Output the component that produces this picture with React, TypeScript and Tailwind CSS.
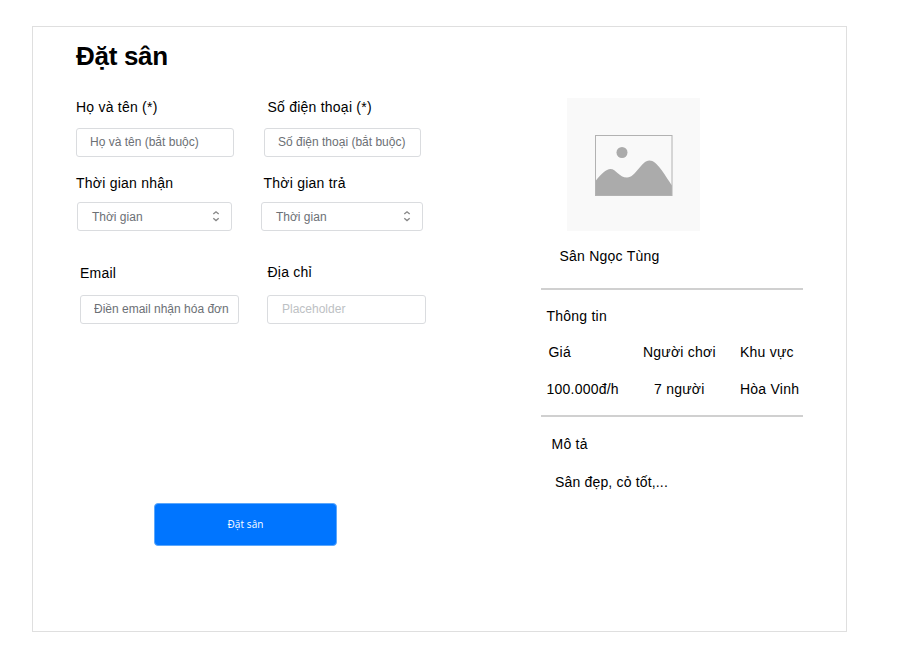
import type { ReactNode } from "react";

function Label({ className = "", children }: { className?: string; children: ReactNode }) {
  return (
    <span className={`block h-5 whitespace-nowrap text-[14px] leading-5 text-black ${className}`}>{children}</span>
  );
}

function TextInput({ className = "", placeholder }: { className?: string; placeholder: string }) {
  return (
    <input
      type="text"
      placeholder={placeholder}
      className={`block h-[29px] rounded-[3px] border border-[#dadcdf] bg-white pb-0.5 text-[12px] outline-none ${className}`}
    />
  );
}

function Select({ className = "" }: { className?: string }) {
  return (
    <button
      type="button"
      className={`flex h-[29px] items-center justify-between rounded-[3px] border border-[#dadcdf] bg-white pl-[14px] text-[12px] text-[#6c7075] ${className}`}
    >
      <span>Thời gian</span>
      <svg width="8" height="12" viewBox="0 0 8 12" fill="none" stroke="#888" strokeWidth="1.4" className="-mt-px">
        <path d="M1.3 4 4 1.8 6.7 4M1.3 8.3 4 10.5 6.7 8.3" />
      </svg>
    </button>
  );
}

export default function App() {
  return (
    <div className="h-[672px] w-[905px] overflow-hidden bg-white pl-8 pt-[26px] font-['Liberation_Sans',Arial,sans-serif]">
      <main className="flex h-[606px] w-[815px] border border-[#dfdfdf]">
        <form className="flex w-[508px] flex-col pl-[43px] pt-[13px]">
          <h1 className="h-8 text-[26px] font-bold leading-8 tracking-[-0.3px] text-black">Đặt sân</h1>

          <div className="mt-[25px] flex">
            <div className="w-[188px]">
              <Label className="tracking-[0.23px]">Họ và tên (*)</Label>
              <TextInput className="mt-[11px] w-[158px] pl-[13px] placeholder:text-[#6c7075]" placeholder="Họ và tên (bắt buộc)" />
            </div>
            <div>
              <Label className="pl-[3.5px] tracking-[0.23px]">Số điện thoại (*)</Label>
              <TextInput className="mt-[11px] w-[157px] pl-[13px] placeholder:text-[#6c7075]" placeholder="Số điện thoại (bắt buộc)" />
            </div>
          </div>

          <div className="mt-4 flex">
            <div className="w-[185px]">
              <Label className="tracking-[0.23px]">Thời gian nhận</Label>
              <Select className="ml-px mt-[9px] w-[155px] pr-[11px]" />
            </div>
            <div>
              <Label className="pl-[2.5px] tracking-[0.23px]">Thời gian trả</Label>
              <Select className="mt-[9px] w-[162px] pr-[11px]" />
            </div>
          </div>

          <div className="mt-8 flex pl-[4px]">
            <div className="w-[187px]">
              <Label className="tracking-[0.23px]">Email</Label>
              <TextInput className="mt-3 w-[159px] pl-[13px] placeholder:text-[#6c7075]" placeholder="Điền email nhận hóa đơn" />
            </div>
            <div className="-mt-px">
              <Label className="pl-[0.5px] tracking-[0.23px]">Địa chỉ</Label>
              <TextInput className="mt-[13px] w-[159px] pl-[14px] placeholder:text-[#bdc1c4]" placeholder="Placeholder" />
            </div>
          </div>

          <button
            type="button"
            className="ml-[78px] mt-[179px] h-[43px] w-[183px] rounded-[4px] border border-[#5ca7fb] bg-[#0075ff] font-['Open_Sans',sans-serif] text-[10px] font-medium tracking-[0.1px] text-white"
          >
            Đặt sân
          </button>
        </form>

        <aside className="w-[262px] pt-[71px]">
          <div className="ml-[26px] flex h-[133px] w-[133px] pl-7 pt-[37px] bg-[#f9f9f9]">
            <svg width="78" height="61" viewBox="0 0 78 61">
              <path
                d="M0.5 46C6 39 11 34 15.5 34C21 34 24 42.5 32 42.5C41 42.5 46 25.5 54.5 25.5C62 25.5 69 39 77 50.5V60.5H0.5Z"
                fill="#ababab"
              />
              <circle cx="27" cy="17.5" r="5.5" fill="#ababab" />
              <rect x="0.5" y="0.5" width="76.5" height="60" fill="none" stroke="#b2b2b2" />
            </svg>
          </div>
          <Label className="mt-[15px] pl-[18.5px] tracking-[0.23px]">Sân Ngọc Tùng</Label>

          <hr className="mt-[22px] h-[2px] border-0 bg-[#d0d0d0]" />
          <Label className="mt-4 pl-[5.5px] tracking-[0.23px]">Thông tin</Label>
          <div className="mt-4 grid grid-cols-[102px_97px_63px] gap-y-[17px]">
            <Label className="pl-[7.5px] tracking-[0.23px]">Giá</Label>
            <Label className="tracking-[0.23px]">Người chơi</Label>
            <Label className="tracking-[0.23px]">Khu vực</Label>
            <Label className="pl-[5.5px] tracking-[0.23px]">100.000đ/h</Label>
            <Label className="pl-[11px] tracking-[0.23px]">7 người</Label>
            <Label className="tracking-[0.23px]">Hòa Vinh</Label>
          </div>

          <hr className="mt-4 h-[2px] border-0 bg-[#d0d0d0]" />
          <Label className="mt-[17px] pl-[10.5px] tracking-[0.23px]">Mô tả</Label>
          <Label className="mt-[18px] pl-[14px] tracking-[0.17px]">Sân đẹp, cỏ tốt,...</Label>
        </aside>
      </main>
    </div>
  );
}
